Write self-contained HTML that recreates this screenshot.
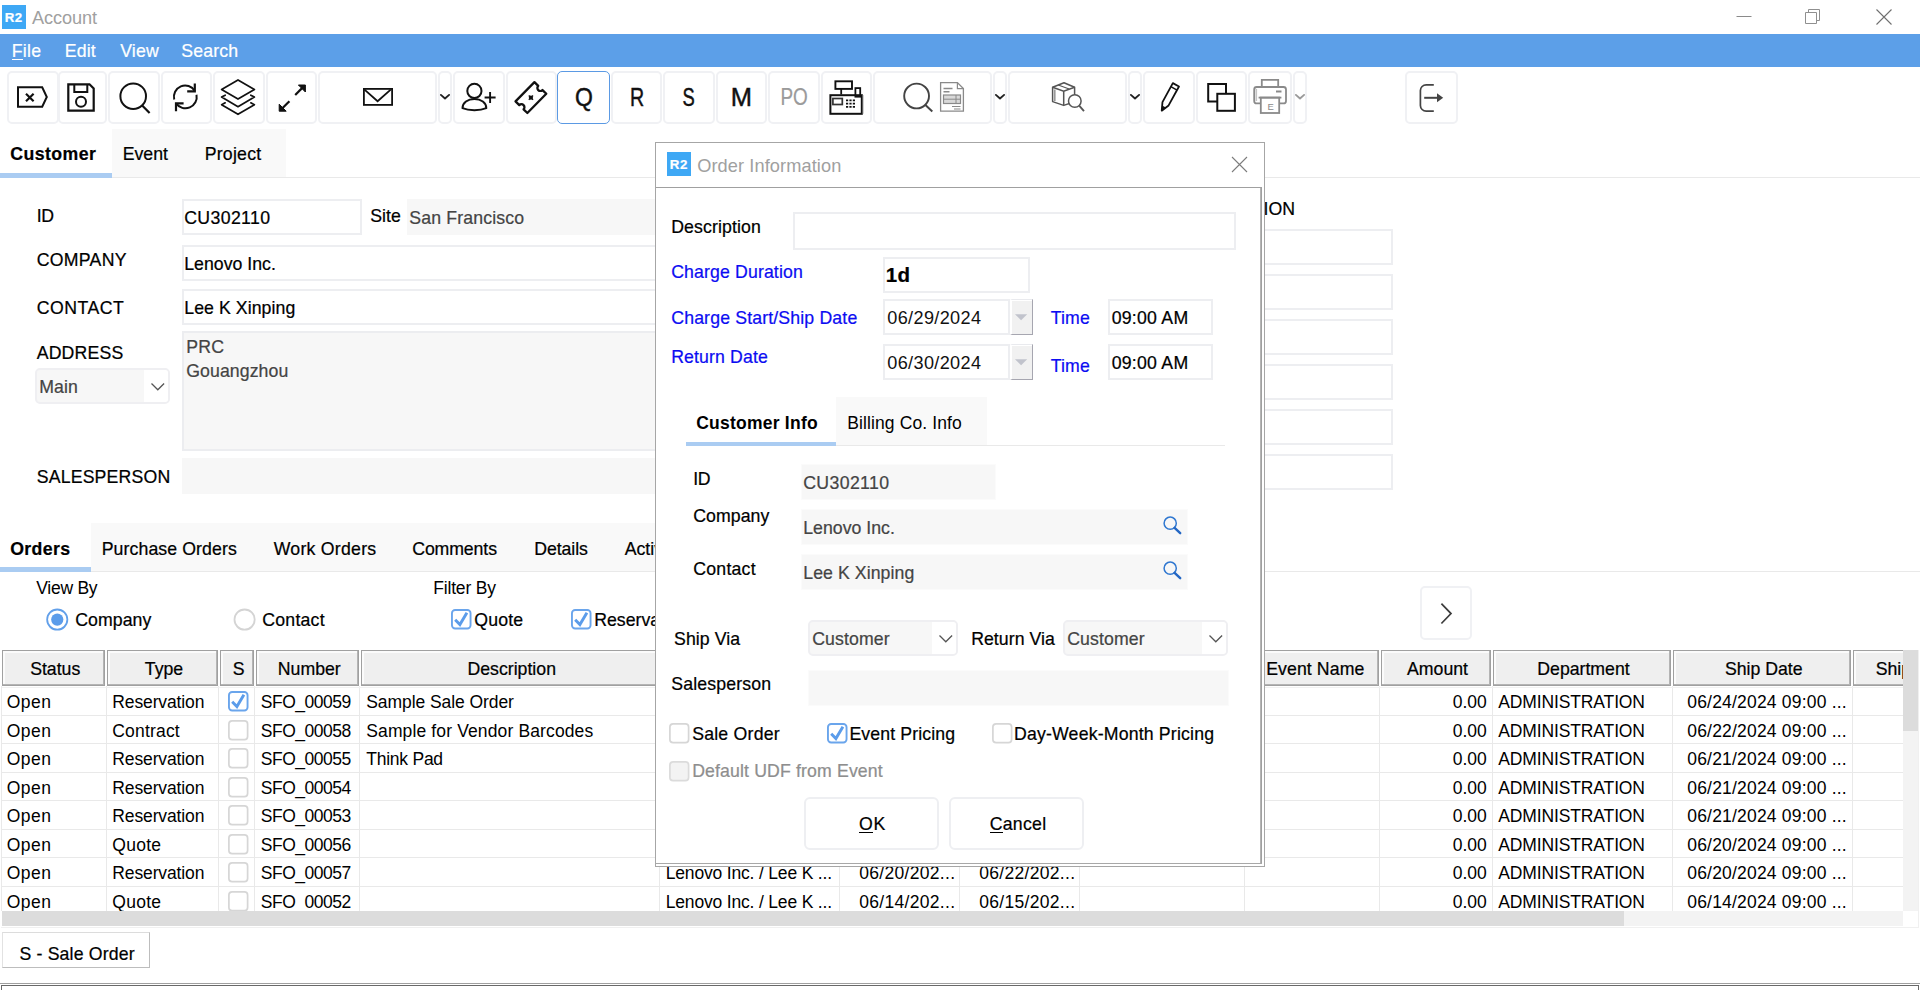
<!DOCTYPE html>
<html lang="en"><head><meta charset="utf-8"><title>Account</title>
<style>
html,body{margin:0;padding:0;background:#fff;}
body{width:1920px;height:990px;overflow:hidden;font-family:"Liberation Sans",sans-serif;color:#000;}
#app{position:relative;width:1920px;height:990px;overflow:hidden;background:#fff;}
#app div,#app span.t,#app svg{position:absolute;box-sizing:border-box;}
.t{white-space:pre;line-height:1;-webkit-text-stroke:0.22px currentColor;}
.t u{text-decoration:underline;text-underline-offset:2px;text-decoration-thickness:1.5px;}
.tb{border:2px solid #f0f1f4;border-radius:5px;background:#fff;}
.tbq{border:1.5px solid #5b9ae4;border-radius:5px;background:#fff;}
.inp{border:2px solid #edeef1;background:#fff;}
.ro{background:#f7f7f7;}
.ro2{background:#f7f7f7;border:1px solid #fbfbfb;}
.rob{background:#f7f7f7;border:2px solid #ecedf0;}
.dd{background:#f7f7f7;border:2px solid #efeff2;border-radius:5px;overflow:hidden;}
.dd i{position:absolute;right:0;top:0;bottom:0;width:24px;background:#fff;}
.th{background:#efefef;border:1px solid #a0a0a0;box-shadow:inset -1px -1px 0 #b4b4b4, inset 2px 2px 0 #fbfbfb;}
.cb{border:1px solid #c9c9c9;border-radius:3px;background:#fff;}
.cbc{border:1.5px solid #5b9be6;border-radius:3px;background:#fff;}
.cbd{border:1px solid #d4d4d4;border-radius:3px;background:#f3f3f3;}
.vl{background:#e9e9e9;width:1px;}
.hl{background:#e9e9e9;height:1px;}
.btn{border:2px solid #eeeff2;border-radius:6px;background:#fff;}

</style></head>
<body>
<div id="app">
<div style="left:2px;top:5px;width:24px;height:24px;background:#3ea8f5;"></div>
<span class="t" style="left:4.80px;top:11.00px;font-size:13.3px;letter-spacing:0.432px;font-weight:700;color:#fff;">R2</span>
<span class="t" style="left:31.93px;top:9.00px;font-size:18.2px;letter-spacing:-0.105px;color:#a0a0a0;-webkit-text-stroke:0;">Account</span>
<svg style="left:1730px;top:4px;" width="170" height="26" viewBox="0 0 170 26">
      <path d="M6.5 12.5h15" stroke="#8a8a8a" stroke-width="1" fill="none"/>
      <path d="M75.5 8.500000h11v11h-11z M78.5 8.500000v-3h11v11h-3" stroke="#8f8f8f" stroke-width="1" fill="none"/>
      <path d="M146.5 5.5l15 15 M161.5 5.5l-15 15" stroke="#6f6f6f" stroke-width="1.1" fill="none"/></svg>
<div style="left:0px;top:34px;width:1920px;height:33px;background:#5c9fe8;"></div>
<span class="t" style="left:11.73px;top:43.00px;font-size:17.7px;letter-spacing:0.284px;color:#fff;">File</span><div style="left:11.73px;top:58.5px;width:10.95px;height:1.5px;background:#fff;"></div>
<span class="t" style="left:64.73px;top:43.00px;font-size:17.7px;letter-spacing:0.167px;color:#fff;">Edit</span>
<span class="t" style="left:120.23px;top:43.00px;font-size:17.7px;letter-spacing:0.155px;color:#fff;">View</span>
<span class="t" style="left:181.23px;top:43.00px;font-size:17.7px;letter-spacing:0.184px;color:#fff;">Search</span>
<div class="tb" style="left:7px;top:71px;width:51.5px;height:52.5px;"></div>
<svg style="left:12px;top:80px;" width="42" height="36" viewBox="12 80 42 36">
<path d="M18 87.3h24.2l4.6 9.7-4.6 9.7H18z" fill="none" stroke="#111" stroke-width="2" stroke-linejoin="miter"/>
<path d="M26 93.8l7.6 7.4M33.6 93.8l-7.6 7.4" stroke="#111" stroke-width="2.2"/></svg>
<div class="tb" style="left:58px;top:71px;width:48.5px;height:52.5px;"></div>
<svg style="left:62px;top:78px;" width="38" height="38" viewBox="62 78 38 38">
<path d="M68.3 84.3h21.2l4.2 4.2v22.2H68.3z" fill="none" stroke="#111" stroke-width="2.2"/>
<path d="M74.3 84.5v7.6h13v-7.6" fill="none" stroke="#111" stroke-width="2"/>
<circle cx="81" cy="101.8" r="5" fill="none" stroke="#111" stroke-width="2"/></svg>
<div class="tb" style="left:107.5px;top:71px;width:52px;height:52.5px;"></div>
<svg style="left:115px;top:78px;" width="40" height="40" viewBox="115 78 40 40">
<circle cx="133.2" cy="96.2" r="12.8" fill="none" stroke="#111" stroke-width="2"/>
<path d="M142.2 105.4l7.4 7.6" stroke="#111" stroke-width="2.2"/></svg>
<div class="tb" style="left:160.5px;top:71px;width:51px;height:52.5px;"></div>
<svg style="left:166px;top:78px;" width="40" height="40" viewBox="166 78 40 40">
<path d="M174.2 99.5a11.3 11.3 0 0 1 20.6-8.6" fill="none" stroke="#111" stroke-width="2"/>
<path d="M196.5 94.8a11.3 11.3 0 0 1 -20.4 8.6" fill="none" stroke="#111" stroke-width="2"/>
<path d="M194.8 83.4v7.9h-7.6" fill="none" stroke="#111" stroke-width="2.2"/>
<path d="M176 111.2v-7.9h7.6" fill="none" stroke="#111" stroke-width="2.2"/></svg>
<div class="tb" style="left:212.5px;top:71px;width:52px;height:52.5px;"></div>
<svg style="left:216px;top:76px;" width="44" height="44" viewBox="216 76 44 44">
<path d="M238 79.9l16.4 9.6-16.4 9.6-16.4-9.600000z" fill="none" stroke="#111" stroke-width="1.700000" stroke-linejoin="round"/>
<path d="M225.2 95.200000l-3.600000 1.900000 16.400000 9.600000 16.400000-9.600000-3.600000-1.900000" fill="none" stroke="#111" stroke-width="1.700000" stroke-linejoin="round" stroke-linecap="round"/>
<path d="M225.2 102.800000l-3.600000 1.900000 16.400000 9.600000 16.400000-9.600000-3.600000-1.900000" fill="none" stroke="#111" stroke-width="1.700000" stroke-linejoin="round" stroke-linecap="round"/></svg>
<div class="tb" style="left:265.5px;top:71px;width:51px;height:52.5px;"></div>
<svg style="left:272px;top:78px;" width="40" height="40" viewBox="272 78 40 40">
<path d="M295.2 95l8.600000-8.600000" stroke="#111" stroke-width="2.200000"/>
<path d="M298.4 85h7v7z" fill="#111" stroke="#111" stroke-width="1"/>
<path d="M289.400000 101.200000l-8.600000 8.600000" stroke="#111" stroke-width="2.200000"/>
<path d="M286.2 111.200000h-7v-7z" fill="#111" stroke="#111" stroke-width="1"/></svg>
<div class="tb" style="left:317.5px;top:71px;width:119px;height:52.5px;"></div>
<svg style="left:358px;top:82px;" width="40" height="30" viewBox="358 82 40 30">
<rect x="363.9" y="88.9" width="28.2" height="16" fill="none" stroke="#111" stroke-width="1.8"/>
<path d="M364.5 89.6l13.1 11.6 13.1-11.6" fill="none" stroke="#111" stroke-width="1.8"/></svg>
<div class="tb" style="left:437.5px;top:71px;width:14px;height:52.5px;"></div>
<svg style="left:437.5px;top:90px;" width="14" height="14" viewBox="437.5 90 14 14">
<path d="M440.4 94.9l4.1 3.6 4.1-3.6" fill="none" stroke="#222" stroke-width="1.9" stroke-linecap="round" stroke-linejoin="round"/></svg>
<div class="tb" style="left:452.5px;top:71px;width:52px;height:52.5px;"></div>
<svg style="left:456px;top:78px;" width="46" height="38" viewBox="456 78 46 38">
<circle cx="474.4" cy="90.9" r="7.1" fill="none" stroke="#111" stroke-width="2"/>
<path d="M462.5 108.2c0-5.4 5.2-9.2 11.9-9.2s11.900000 3.8 11.9 9.2c-3 1.300000-7 2-11.9 2s-8.900000-.7-11.9-2z" fill="none" stroke="#111" stroke-width="2" stroke-linejoin="round"/>
<path d="M484.6 97.5h11M490.1 92v11" stroke="#111" stroke-width="1.9"/></svg>
<div class="tb" style="left:505.5px;top:71px;width:51px;height:52.5px;"></div>
<svg style="left:510px;top:76px;" width="42" height="42" viewBox="510 76 42 42">
<g transform="translate(530.9 97.6) rotate(-45.5)">
<path d="M-13.500000 -8.300000h27v5.300000a3 3 0 0 0 0 6v5.300000h-27v-5.300000a3 3 0 0 0 0 -6z" fill="none" stroke="#111" stroke-width="2.300000" stroke-linejoin="round"/>
<circle cx="0" cy="0" r="2" fill="#111"/>
<path d="M-3 0h6M0 -3v6" stroke="#111" stroke-width="1.400000"/>
</g></svg>
<div class="tbq" style="left:557px;top:71px;width:53px;height:52.5px;"></div>
<span class="t" style="left:574.38px;top:85.00px;font-size:25.5px;color:#111;transform:scaleX(0.9);transform-origin:center center;-webkit-text-stroke:0.45px #111;">Q</span>
<div class="tb" style="left:610.5px;top:71px;width:51px;height:52.5px;"></div>
<span class="t" style="left:627.69px;top:85.00px;font-size:25.5px;color:#111;transform:scaleX(0.77);transform-origin:center center;-webkit-text-stroke:0.45px #111;">R</span>
<div class="tb" style="left:662.5px;top:71px;width:52px;height:52.5px;"></div>
<span class="t" style="left:679.99px;top:85.00px;font-size:25.5px;color:#111;transform:scaleX(0.72);transform-origin:center center;-webkit-text-stroke:0.45px #111;">S</span>
<div class="tb" style="left:715.5px;top:71px;width:51px;height:52.5px;"></div>
<span class="t" style="left:730.77px;top:85.00px;font-size:25.5px;color:#111;transform:scaleX(1);transform-origin:center center;-webkit-text-stroke:0.45px #111;">M</span>
<div class="tb" style="left:767.5px;top:71px;width:52px;height:52.5px;"></div>
<span class="t" style="left:776.78px;top:86.00px;font-size:23.7px;color:#9a9a9a;transform:scaleX(0.8);transform-origin:center center;">PO</span>
<div class="tb" style="left:820.5px;top:71px;width:51px;height:52.5px;"></div>
<svg style="left:826px;top:77px;" width="42" height="41" viewBox="826 77 42 41">
<rect x="835.4" y="81.300000" width="16.6" height="7.6" fill="none" stroke="#111" stroke-width="1.900000"/>
<path d="M841.2 89v5.500000" stroke="#111" stroke-width="1.800000"/>
<rect x="855.4" y="88.100000" width="4.800000" height="8.600000" fill="none" stroke="#111" stroke-width="1.800000"/>
<rect x="830.4" y="95.200000" width="31.400000" height="18.600000" fill="none" stroke="#111" stroke-width="2"/>
<path d="M862.8 95v18.800000" stroke="#666" stroke-width="1"/>
<rect x="832.9" y="98.500000" width="9.400000" height="6" fill="none" stroke="#333" stroke-width="1.700000"/>
<path d="M846 100.4h9M846 103.6h9M846 106.800000h9" stroke="#111" stroke-width="1.700000" stroke-dasharray="2.2 1.2"/></svg>
<div class="tb" style="left:872.5px;top:71px;width:119px;height:52.5px;"></div>
<svg style="left:898px;top:78px;" width="72" height="38" viewBox="898 78 72 38">
<circle cx="916.6" cy="96" r="12.4" fill="none" stroke="#444" stroke-width="1.900000"/>
<path d="M925.4 105.100000l6.900000 6.300000" stroke="#444" stroke-width="2"/>
<path d="M940.6 82.600000h16.800000l6 6v22.600000h-22.800000z" fill="#fff" stroke="#8a8a8a" stroke-width="1.300000"/>
<path d="M957.4 82.600000v6h6" fill="none" stroke="#8a8a8a" stroke-width="1.200000"/>
<path d="M943.5 88.500000h9M943.5 91.700000h6" stroke="#8a8a8a" stroke-width="1.500000"/>
<rect x="943.5" y="95" width="17" height="8.500000" fill="#d9d9d9" stroke="#8a8a8a" stroke-width="1.200000"/>
<path d="M943.5 99.200000h17M956 95v8.500000" stroke="#8a8a8a" stroke-width="1"/>
<path d="M952 106.500000h8.500000M954 109h6.500000" stroke="#8a8a8a" stroke-width="1.200000"/></svg>
<div class="tb" style="left:992.5px;top:71px;width:14px;height:52.5px;"></div>
<svg style="left:992.5px;top:90px;" width="14" height="14" viewBox="992.5 90 14 14">
<path d="M995.4 94.9l4.1 3.6 4.1-3.6" fill="none" stroke="#222" stroke-width="1.9" stroke-linecap="round" stroke-linejoin="round"/></svg>
<div class="tb" style="left:1007.5px;top:71px;width:119px;height:52.5px;"></div>
<svg style="left:1046px;top:78px;" width="44" height="38" viewBox="1046 78 44 38">
<path d="M1052.6 87.300000l11.400000-4.600000 10.600000 4.600000v14.500000l-10.900000 3.600000-11.100000-3.800000z" fill="none" stroke="#555" stroke-width="1.500000" stroke-linejoin="round"/>
<path d="M1052.6 87.300000l11.100000 3.800000 10.900000-3.800000M1063.700000 91.100000v14.300000" fill="none" stroke="#555" stroke-width="1.500000"/>
<path d="M1058.2 85l11 4" stroke="#555" stroke-width="1.200000"/>
<path d="M1054.8 89.500000v11.500000" stroke="#999" stroke-width="1.600000"/>
<circle cx="1074.800000" cy="101" r="6.300000" fill="#fff" stroke="#555" stroke-width="1.500000"/>
<path d="M1079.4 105.800000l4.600000 5.400000" stroke="#555" stroke-width="1.800000"/></svg>
<div class="tb" style="left:1127.5px;top:71px;width:14px;height:52.5px;"></div>
<svg style="left:1127.5px;top:90px;" width="14" height="14" viewBox="1127.5 90 14 14">
<path d="M1130.4 94.9l4.1 3.6 4.1-3.6" fill="none" stroke="#222" stroke-width="1.9" stroke-linecap="round" stroke-linejoin="round"/></svg>
<div class="tb" style="left:1142.5px;top:71px;width:52px;height:52.5px;"></div>
<svg style="left:1150px;top:78px;" width="38" height="40" viewBox="1150 78 38 40">
<g transform="translate(1168.9 97.6) rotate(28.7)">
<path d="M-3.500000 -14.600000h7v21.600000l-3.500000 7.900000-3.500000-7.900000z" fill="none" stroke="#111" stroke-width="1.800000" stroke-linejoin="round"/>
<path d="M-3.500000 -10.500000h7" stroke="#111" stroke-width="1.500000"/>
<path d="M-2.200000 10.200000l2.200000 5 2.200000-5z" fill="#111"/>
</g></svg>
<div class="tb" style="left:1195.5px;top:71px;width:51px;height:52.5px;"></div>
<svg style="left:1202px;top:78px;" width="40" height="40" viewBox="1202 78 40 40">
<rect x="1208.2" y="84" width="17.800000" height="17.500000" fill="none" stroke="#111" stroke-width="2"/>
<rect x="1217.3" y="93.800000" width="17.600000" height="17" fill="#fff" stroke="#111" stroke-width="2"/></svg>
<div class="tb" style="left:1247.5px;top:71px;width:44px;height:52.5px;"></div>
<svg style="left:1250px;top:76px;" width="40" height="42" viewBox="1250 76 40 42">
<path d="M1261.800000 87v-7.200000h16.400000v7.200000" fill="none" stroke="#8a8a8a" stroke-width="1.800000"/>
<rect x="1254.2" y="87" width="31.800000" height="16.400000" rx="2.500000" fill="#fff" stroke="#8a8a8a" stroke-width="1.800000"/>
<path d="M1256.300000 89v12" stroke="#c4c4c4" stroke-width="1.600000"/>
<path d="M1276 91.500000h5.500000" stroke="#8a8a8a" stroke-width="2"/>
<rect x="1260.800000" y="97.600000" width="18.400000" height="15.400000" fill="#fff" stroke="#8a8a8a" stroke-width="1.800000"/>
<path d="M1258.600000 97.600000h22.800000" stroke="#8a8a8a" stroke-width="1.800000"/>
<text x="1270.6" y="109.800000" font-family="Liberation Sans, sans-serif" font-size="9.500000" fill="#8a8a8a" text-anchor="middle">E</text></svg>
<div class="tb" style="left:1292.5px;top:71px;width:14px;height:52.5px;"></div>
<svg style="left:1292.5px;top:90px;" width="14" height="14" viewBox="1292.5 90 14 14">
<path d="M1295.4 94.9l4.1 3.6 4.1-3.6" fill="none" stroke="#9a9a9a" stroke-width="1.9" stroke-linecap="round" stroke-linejoin="round"/></svg>
<div class="tb" style="left:1404.5px;top:71px;width:53px;height:52.5px;"></div>
<svg style="left:1412px;top:78px;" width="40" height="40" viewBox="1412 78 40 40">
<path d="M1433.800000 84.800000h-7.600000a5.800000 5.800000 0 0 0 -5.800000 5.800000v14.800000a5.800000 5.800000 0 0 0 5.800000 5.800000h7.600000" fill="none" stroke="#444" stroke-width="1.700000"/>
<path d="M1424.200000 97.800000h14" stroke="#444" stroke-width="2"/>
<path d="M1437 93.300000l6.200000 4.500000-6.200000 4.500000z" fill="#444"/></svg>
<div style="left:112px;top:129px;width:174px;height:48px;background:#f9f9f9;"></div>
<div style="left:0px;top:177px;width:1920px;height:1px;background:#e9e9e9;"></div>
<div style="left:0px;top:173px;width:112px;height:5px;background:#aaccf2;"></div>
<span class="t" style="left:10.23px;top:146.00px;font-size:17.7px;letter-spacing:0.448px;font-weight:700;">Customer</span>
<span class="t" style="left:122.73px;top:146.00px;font-size:17.7px;letter-spacing:-0.017px;">Event</span>
<span class="t" style="left:204.73px;top:146.00px;font-size:17.7px;letter-spacing:0.227px;">Project</span>
<span class="t" style="left:36.73px;top:208.00px;font-size:17.7px;letter-spacing:-0.268px;">ID</span>
<span class="t" style="left:36.73px;top:252.00px;font-size:17.7px;letter-spacing:0.289px;">COMPANY</span>
<span class="t" style="left:36.73px;top:300.00px;font-size:17.7px;letter-spacing:0.497px;">CONTACT</span>
<span class="t" style="left:36.73px;top:345.00px;font-size:17.7px;letter-spacing:0.162px;">ADDRESS</span>
<span class="t" style="left:36.73px;top:469.00px;font-size:17.7px;letter-spacing:0.174px;">SALESPERSON</span>
<span class="t" style="left:370.23px;top:208.00px;font-size:17.7px;letter-spacing:0.042px;">Site</span>
<div class="inp" style="left:182px;top:199px;width:180px;height:36px;"></div>
<span class="t" style="left:184.23px;top:210.00px;font-size:17.7px;letter-spacing:0.361px;">CU302110</span>
<div class="ro" style="left:407px;top:199px;width:773px;height:36px;"></div>
<span class="t" style="left:409.23px;top:210.00px;font-size:17.7px;letter-spacing:0.161px;color:#444;">San Francisco</span>
<div class="inp" style="left:182px;top:245px;width:998px;height:36px;"></div>
<span class="t" style="left:184.23px;top:256.00px;font-size:17.7px;letter-spacing:0.018px;">Lenovo Inc.</span>
<div class="inp" style="left:182px;top:289px;width:998px;height:36px;"></div>
<span class="t" style="left:184.23px;top:300.00px;font-size:17.7px;letter-spacing:0.076px;">Lee K Xinping</span>
<div class="rob" style="left:182px;top:331px;width:998px;height:120px;"></div>
<span class="t" style="left:186.23px;top:339.00px;font-size:17.7px;letter-spacing:0.264px;color:#444;">PRC</span>
<span class="t" style="left:186.23px;top:363.00px;font-size:17.7px;letter-spacing:0.084px;color:#444;">Gouangzhou</span>
<div class="ro" style="left:182px;top:458px;width:998px;height:36px;"></div>
<div class="dd" style="left:35px;top:368px;width:135px;height:36px;"><i></i></div>
<span class="t" style="left:39.23px;top:379.00px;font-size:17.7px;letter-spacing:0.077px;color:#444;">Main</span>
<svg style="left:149px;top:380px;" width="18" height="14" viewBox="0 0 18 14"><path d="M2.5 3.5l6.3 6.3 6.3-6.3" stroke="#555" stroke-width="1.3" fill="none"/></svg>
<span class="t" style="left:1062.17px;top:201.00px;font-size:17.7px;">ADDITIONAL INFORMATION</span>
<div class="inp" style="left:1200px;top:229px;width:193px;height:36px;"></div>
<div class="inp" style="left:1200px;top:274px;width:193px;height:36px;"></div>
<div class="inp" style="left:1200px;top:319px;width:193px;height:36px;"></div>
<div class="inp" style="left:1200px;top:364px;width:193px;height:36px;"></div>
<div class="inp" style="left:1200px;top:409px;width:193px;height:36px;"></div>
<div class="inp" style="left:1200px;top:454px;width:193px;height:36px;"></div>
<div style="left:91px;top:523px;width:1109px;height:48px;background:#f9f9f9;"></div>
<div style="left:0px;top:571px;width:1920px;height:1px;background:#e9e9e9;"></div>
<div style="left:0px;top:567px;width:91px;height:5px;background:#aaccf2;"></div>
<span class="t" style="left:10.23px;top:541.00px;font-size:17.7px;letter-spacing:0.356px;font-weight:700;">Orders</span>
<span class="t" style="left:101.73px;top:541.00px;font-size:17.7px;letter-spacing:0.096px;">Purchase Orders</span>
<span class="t" style="left:273.73px;top:541.00px;font-size:17.7px;letter-spacing:0.248px;">Work Orders</span>
<span class="t" style="left:412.23px;top:541.00px;font-size:17.7px;letter-spacing:-0.108px;">Comments</span>
<span class="t" style="left:534.23px;top:541.00px;font-size:17.7px;letter-spacing:-0.061px;">Details</span>
<span class="t" style="left:624.73px;top:541.00px;font-size:17.7px;">Activities</span>
<span class="t" style="left:36.24px;top:580.00px;font-size:17.5px;letter-spacing:-0.253px;-webkit-text-stroke:0;">View By</span>
<span class="t" style="left:433.24px;top:580.00px;font-size:17.5px;letter-spacing:-0.172px;-webkit-text-stroke:0;">Filter By</span>
<svg style="left:45px;top:607px;" width="25" height="25" viewBox="0 0 25 25"><circle cx="12.25" cy="12.6" r="10.1" fill="#fff" stroke="#62a0ea" stroke-width="1.800000"/><circle cx="12.25" cy="12.6" r="6.1" fill="#5b9cea"/></svg>
<span class="t" style="left:75.23px;top:612.00px;font-size:17.7px;letter-spacing:0.064px;">Company</span>
<svg style="left:232px;top:607px;" width="25" height="25" viewBox="0 0 25 25"><circle cx="12.6" cy="12.6" r="10.1" fill="#fff" stroke="#d4d4d4" stroke-width="1.800000"/></svg>
<span class="t" style="left:262.23px;top:612.00px;font-size:17.7px;letter-spacing:0.240px;">Contact</span>
<svg style="left:451.25px;top:608.6px;" width="21" height="21" viewBox="0 0 21 21"><rect x="0.95" y="0.95" width="18.6" height="18.6" rx="3.2" fill="#fff" stroke="#6aa5ec" stroke-width="1.9"/><path d="M4.2 10.8l4.700000 4.800000 7-11.800000" stroke="#5b9cea" stroke-width="2.900000" fill="none" stroke-linejoin="miter"/></svg>
<span class="t" style="left:474.23px;top:612.00px;font-size:17.7px;letter-spacing:0.193px;">Quote</span>
<svg style="left:571.25px;top:608.6px;" width="21" height="21" viewBox="0 0 21 21"><rect x="0.95" y="0.95" width="18.6" height="18.6" rx="3.2" fill="#fff" stroke="#6aa5ec" stroke-width="1.9"/><path d="M4.2 10.8l4.700000 4.800000 7-11.800000" stroke="#5b9cea" stroke-width="2.900000" fill="none" stroke-linejoin="miter"/></svg>
<span class="t" style="left:594.23px;top:612.00px;font-size:17.7px;">Reservation</span>
<div class="tb" style="left:1420px;top:586px;width:52px;height:54px;"></div>
<svg style="left:1436px;top:600px;" width="20" height="26" viewBox="0 0 20 26"><path d="M5.400000 3.700000l9.600000 9.900000-9.600000 9.900000" stroke="#3c3c3c" stroke-width="1.700000" fill="none"/></svg>
<div class="vl" style="left:1px;top:686px;width:1px;height:225px;"></div>
<div class="vl" style="left:105.5px;top:686px;width:1px;height:225px;"></div>
<div class="vl" style="left:218px;top:686px;width:1px;height:225px;"></div>
<div class="vl" style="left:254px;top:686px;width:1px;height:225px;"></div>
<div class="vl" style="left:359px;top:686px;width:1px;height:225px;"></div>
<div class="vl" style="left:659px;top:686px;width:1px;height:225px;"></div>
<div class="vl" style="left:839px;top:686px;width:1px;height:225px;"></div>
<div class="vl" style="left:959px;top:686px;width:1px;height:225px;"></div>
<div class="vl" style="left:1079px;top:686px;width:1px;height:225px;"></div>
<div class="vl" style="left:1244px;top:686px;width:1px;height:225px;"></div>
<div class="vl" style="left:1378.5px;top:686px;width:1px;height:225px;"></div>
<div class="vl" style="left:1491.5px;top:686px;width:1px;height:225px;"></div>
<div class="vl" style="left:1671.5px;top:686px;width:1px;height:225px;"></div>
<div class="vl" style="left:1851.5px;top:686px;width:1px;height:225px;"></div>
<div style="left:2px;top:687px;width:1901px;height:1px;background:#f1f1f1;"></div>
<div class="hl" style="left:2px;top:715px;width:1901px;height:1px;"></div>
<div class="hl" style="left:2px;top:743px;width:1901px;height:1px;"></div>
<div class="hl" style="left:2px;top:772px;width:1901px;height:1px;"></div>
<div class="hl" style="left:2px;top:800px;width:1901px;height:1px;"></div>
<div class="hl" style="left:2px;top:829px;width:1901px;height:1px;"></div>
<div class="hl" style="left:2px;top:857px;width:1901px;height:1px;"></div>
<div class="hl" style="left:2px;top:886px;width:1901px;height:1px;"></div>
<div class="hl" style="left:2px;top:914px;width:1901px;height:1px;"></div>
<div class="th" style="left:2px;top:650px;width:103px;height:36px;"></div>
<span class="t" style="left:30.17px;top:661.00px;font-size:17.7px;">Status</span>
<div class="th" style="left:107px;top:650px;width:110.5px;height:36px;"></div>
<span class="t" style="left:144.82px;top:661.00px;font-size:17.7px;">Type</span>
<div class="th" style="left:220px;top:650px;width:34px;height:36px;"></div>
<span class="t" style="left:232.84px;top:661.00px;font-size:17.7px;">S</span>
<div class="th" style="left:256px;top:650px;width:103px;height:36px;"></div>
<span class="t" style="left:277.79px;top:661.00px;font-size:17.7px;">Number</span>
<div class="th" style="left:361px;top:650px;width:298px;height:36px;"></div>
<span class="t" style="left:467.51px;top:661.00px;font-size:17.7px;">Description</span>
<div class="th" style="left:661px;top:650px;width:178px;height:36px;"></div>
<span class="t" style="left:713.41px;top:661.00px;font-size:17.7px;">Customer</span>
<div class="th" style="left:841px;top:650px;width:118px;height:36px;"></div>
<span class="t" style="left:861.93px;top:661.00px;font-size:17.7px;">Start Date</span>
<div class="th" style="left:961px;top:650px;width:118px;height:36px;"></div>
<span class="t" style="left:984.88px;top:661.00px;font-size:17.7px;">End Date</span>
<div class="th" style="left:1081px;top:650px;width:162px;height:36px;"></div>
<span class="t" style="left:1129.83px;top:661.00px;font-size:17.7px;">Event ID</span>
<div class="th" style="left:1245px;top:650px;width:133.5px;height:36px;"></div>
<span class="t" style="left:1266.23px;top:661.00px;font-size:17.7px;letter-spacing:0.082px;">Event Name</span>
<div class="th" style="left:1381px;top:650px;width:109.5px;height:36px;"></div>
<span class="t" style="left:1407.02px;top:661.00px;font-size:17.7px;">Amount</span>
<div class="th" style="left:1493px;top:650px;width:177.5px;height:36px;"></div>
<span class="t" style="left:1537.29px;top:661.00px;font-size:17.7px;">Department</span>
<div class="th" style="left:1673px;top:650px;width:178px;height:36px;"></div>
<span class="t" style="left:1724.91px;top:661.00px;font-size:17.7px;">Ship Date</span>
<div class="th" style="left:1853px;top:650px;width:107px;height:36px;"></div>
<span class="t" style="left:1875.73px;top:661.00px;font-size:17.7px;">Ship Via</span>
<span class="t" style="left:6.74px;top:694.00px;font-size:17.5px;letter-spacing:0.456px;-webkit-text-stroke:0;">Open</span>
<span class="t" style="left:112.24px;top:694.00px;font-size:17.5px;letter-spacing:-0.114px;-webkit-text-stroke:0;">Reservation</span>
<svg style="left:227.75px;top:691.4px;" width="21" height="21" viewBox="0 0 21 21"><rect x="0.95" y="0.95" width="18.6" height="18.6" rx="3.2" fill="#fff" stroke="#6aa5ec" stroke-width="1.9"/><path d="M4.2 10.8l4.700000 4.800000 7-11.800000" stroke="#5b9cea" stroke-width="2.900000" fill="none" stroke-linejoin="miter"/></svg>
<span class="t" style="left:260.74px;top:694.00px;font-size:17.5px;letter-spacing:-0.471px;-webkit-text-stroke:0;">SFO_00059</span>
<span class="t" style="left:366.24px;top:694.00px;font-size:17.5px;letter-spacing:-0.070px;-webkit-text-stroke:0;">Sample Sale Order</span>
<span class="t" style="left:665.74px;top:694.00px;font-size:17.5px;letter-spacing:-0.179px;-webkit-text-stroke:0;">Lenovo Inc. / Lee K ...</span>
<span class="t" style="left:859.24px;top:694.00px;font-size:17.5px;letter-spacing:0.307px;-webkit-text-stroke:0;">06/24/202...</span>
<span class="t" style="left:979.24px;top:694.00px;font-size:17.5px;letter-spacing:0.307px;-webkit-text-stroke:0;">06/25/202...</span>
<span class="t" style="left:1452.64px;top:694.00px;font-size:17.5px;letter-spacing:0.019px;-webkit-text-stroke:0;">0.00</span>
<span class="t" style="left:1498.24px;top:694.00px;font-size:17.5px;letter-spacing:-0.129px;-webkit-text-stroke:0;">ADMINISTRATION</span>
<span class="t" style="left:1687.24px;top:694.00px;font-size:17.5px;letter-spacing:0.197px;-webkit-text-stroke:0;">06/24/2024 09:00 ...</span>
<span class="t" style="left:6.74px;top:723.00px;font-size:17.5px;letter-spacing:0.456px;-webkit-text-stroke:0;">Open</span>
<span class="t" style="left:112.24px;top:723.00px;font-size:17.5px;letter-spacing:0.187px;-webkit-text-stroke:0;">Contract</span>
<svg style="left:227.75px;top:720.4px;" width="21" height="21" viewBox="0 0 21 21"><rect x="0.9" y="0.9" width="18.7" height="18.7" rx="3.2" fill="#fff" stroke="#d6d6d6" stroke-width="1.700000"/></svg>
<span class="t" style="left:260.74px;top:723.00px;font-size:17.5px;letter-spacing:-0.471px;-webkit-text-stroke:0;">SFO_00058</span>
<span class="t" style="left:366.24px;top:723.00px;font-size:17.5px;letter-spacing:0.130px;-webkit-text-stroke:0;">Sample for Vendor Barcodes</span>
<span class="t" style="left:665.74px;top:723.00px;font-size:17.5px;letter-spacing:-0.179px;-webkit-text-stroke:0;">Lenovo Inc. / Lee K ...</span>
<span class="t" style="left:859.24px;top:723.00px;font-size:17.5px;letter-spacing:0.307px;-webkit-text-stroke:0;">06/22/202...</span>
<span class="t" style="left:979.24px;top:723.00px;font-size:17.5px;letter-spacing:0.307px;-webkit-text-stroke:0;">06/23/202...</span>
<span class="t" style="left:1452.64px;top:723.00px;font-size:17.5px;letter-spacing:0.019px;-webkit-text-stroke:0;">0.00</span>
<span class="t" style="left:1498.24px;top:723.00px;font-size:17.5px;letter-spacing:-0.129px;-webkit-text-stroke:0;">ADMINISTRATION</span>
<span class="t" style="left:1687.24px;top:723.00px;font-size:17.5px;letter-spacing:0.197px;-webkit-text-stroke:0;">06/22/2024 09:00 ...</span>
<span class="t" style="left:6.74px;top:751.00px;font-size:17.5px;letter-spacing:0.456px;-webkit-text-stroke:0;">Open</span>
<span class="t" style="left:112.24px;top:751.00px;font-size:17.5px;letter-spacing:-0.114px;-webkit-text-stroke:0;">Reservation</span>
<svg style="left:227.75px;top:748.4px;" width="21" height="21" viewBox="0 0 21 21"><rect x="0.9" y="0.9" width="18.7" height="18.7" rx="3.2" fill="#fff" stroke="#d6d6d6" stroke-width="1.700000"/></svg>
<span class="t" style="left:260.74px;top:751.00px;font-size:17.5px;letter-spacing:-0.471px;-webkit-text-stroke:0;">SFO_00055</span>
<span class="t" style="left:366.24px;top:751.00px;font-size:17.5px;letter-spacing:-0.240px;-webkit-text-stroke:0;">Think Pad</span>
<span class="t" style="left:665.74px;top:751.00px;font-size:17.5px;letter-spacing:-0.179px;-webkit-text-stroke:0;">Lenovo Inc. / Lee K ...</span>
<span class="t" style="left:859.24px;top:751.00px;font-size:17.5px;letter-spacing:0.307px;-webkit-text-stroke:0;">06/21/202...</span>
<span class="t" style="left:979.24px;top:751.00px;font-size:17.5px;letter-spacing:0.307px;-webkit-text-stroke:0;">06/22/202...</span>
<span class="t" style="left:1452.64px;top:751.00px;font-size:17.5px;letter-spacing:0.019px;-webkit-text-stroke:0;">0.00</span>
<span class="t" style="left:1498.24px;top:751.00px;font-size:17.5px;letter-spacing:-0.129px;-webkit-text-stroke:0;">ADMINISTRATION</span>
<span class="t" style="left:1687.24px;top:751.00px;font-size:17.5px;letter-spacing:0.197px;-webkit-text-stroke:0;">06/21/2024 09:00 ...</span>
<span class="t" style="left:6.74px;top:780.00px;font-size:17.5px;letter-spacing:0.456px;-webkit-text-stroke:0;">Open</span>
<span class="t" style="left:112.24px;top:780.00px;font-size:17.5px;letter-spacing:-0.114px;-webkit-text-stroke:0;">Reservation</span>
<svg style="left:227.75px;top:777.4px;" width="21" height="21" viewBox="0 0 21 21"><rect x="0.9" y="0.9" width="18.7" height="18.7" rx="3.2" fill="#fff" stroke="#d6d6d6" stroke-width="1.700000"/></svg>
<span class="t" style="left:260.74px;top:780.00px;font-size:17.5px;letter-spacing:-0.471px;-webkit-text-stroke:0;">SFO_00054</span>
<span class="t" style="left:665.74px;top:780.00px;font-size:17.5px;letter-spacing:-0.179px;-webkit-text-stroke:0;">Lenovo Inc. / Lee K ...</span>
<span class="t" style="left:859.24px;top:780.00px;font-size:17.5px;letter-spacing:0.307px;-webkit-text-stroke:0;">06/21/202...</span>
<span class="t" style="left:979.24px;top:780.00px;font-size:17.5px;letter-spacing:0.307px;-webkit-text-stroke:0;">06/22/202...</span>
<span class="t" style="left:1452.64px;top:780.00px;font-size:17.5px;letter-spacing:0.019px;-webkit-text-stroke:0;">0.00</span>
<span class="t" style="left:1498.24px;top:780.00px;font-size:17.5px;letter-spacing:-0.129px;-webkit-text-stroke:0;">ADMINISTRATION</span>
<span class="t" style="left:1687.24px;top:780.00px;font-size:17.5px;letter-spacing:0.197px;-webkit-text-stroke:0;">06/21/2024 09:00 ...</span>
<span class="t" style="left:6.74px;top:808.00px;font-size:17.5px;letter-spacing:0.456px;-webkit-text-stroke:0;">Open</span>
<span class="t" style="left:112.24px;top:808.00px;font-size:17.5px;letter-spacing:-0.114px;-webkit-text-stroke:0;">Reservation</span>
<svg style="left:227.75px;top:805.4px;" width="21" height="21" viewBox="0 0 21 21"><rect x="0.9" y="0.9" width="18.7" height="18.7" rx="3.2" fill="#fff" stroke="#d6d6d6" stroke-width="1.700000"/></svg>
<span class="t" style="left:260.74px;top:808.00px;font-size:17.5px;letter-spacing:-0.471px;-webkit-text-stroke:0;">SFO_00053</span>
<span class="t" style="left:665.74px;top:808.00px;font-size:17.5px;letter-spacing:-0.179px;-webkit-text-stroke:0;">Lenovo Inc. / Lee K ...</span>
<span class="t" style="left:859.24px;top:808.00px;font-size:17.5px;letter-spacing:0.307px;-webkit-text-stroke:0;">06/21/202...</span>
<span class="t" style="left:979.24px;top:808.00px;font-size:17.5px;letter-spacing:0.307px;-webkit-text-stroke:0;">06/22/202...</span>
<span class="t" style="left:1452.64px;top:808.00px;font-size:17.5px;letter-spacing:0.019px;-webkit-text-stroke:0;">0.00</span>
<span class="t" style="left:1498.24px;top:808.00px;font-size:17.5px;letter-spacing:-0.129px;-webkit-text-stroke:0;">ADMINISTRATION</span>
<span class="t" style="left:1687.24px;top:808.00px;font-size:17.5px;letter-spacing:0.197px;-webkit-text-stroke:0;">06/21/2024 09:00 ...</span>
<span class="t" style="left:6.74px;top:837.00px;font-size:17.5px;letter-spacing:0.456px;-webkit-text-stroke:0;">Open</span>
<span class="t" style="left:112.24px;top:837.00px;font-size:17.5px;letter-spacing:0.290px;-webkit-text-stroke:0;">Quote</span>
<svg style="left:227.75px;top:834.4px;" width="21" height="21" viewBox="0 0 21 21"><rect x="0.9" y="0.9" width="18.7" height="18.7" rx="3.2" fill="#fff" stroke="#d6d6d6" stroke-width="1.700000"/></svg>
<span class="t" style="left:260.74px;top:837.00px;font-size:17.5px;letter-spacing:-0.471px;-webkit-text-stroke:0;">SFO_00056</span>
<span class="t" style="left:665.74px;top:837.00px;font-size:17.5px;letter-spacing:-0.179px;-webkit-text-stroke:0;">Lenovo Inc. / Lee K ...</span>
<span class="t" style="left:859.24px;top:837.00px;font-size:17.5px;letter-spacing:0.307px;-webkit-text-stroke:0;">06/20/202...</span>
<span class="t" style="left:979.24px;top:837.00px;font-size:17.5px;letter-spacing:0.307px;-webkit-text-stroke:0;">06/21/202...</span>
<span class="t" style="left:1452.64px;top:837.00px;font-size:17.5px;letter-spacing:0.019px;-webkit-text-stroke:0;">0.00</span>
<span class="t" style="left:1498.24px;top:837.00px;font-size:17.5px;letter-spacing:-0.129px;-webkit-text-stroke:0;">ADMINISTRATION</span>
<span class="t" style="left:1687.24px;top:837.00px;font-size:17.5px;letter-spacing:0.197px;-webkit-text-stroke:0;">06/20/2024 09:00 ...</span>
<span class="t" style="left:6.74px;top:865.00px;font-size:17.5px;letter-spacing:0.456px;-webkit-text-stroke:0;">Open</span>
<span class="t" style="left:112.24px;top:865.00px;font-size:17.5px;letter-spacing:-0.114px;-webkit-text-stroke:0;">Reservation</span>
<svg style="left:227.75px;top:862.4px;" width="21" height="21" viewBox="0 0 21 21"><rect x="0.9" y="0.9" width="18.7" height="18.7" rx="3.2" fill="#fff" stroke="#d6d6d6" stroke-width="1.700000"/></svg>
<span class="t" style="left:260.74px;top:865.00px;font-size:17.5px;letter-spacing:-0.471px;-webkit-text-stroke:0;">SFO_00057</span>
<span class="t" style="left:665.74px;top:865.00px;font-size:17.5px;letter-spacing:-0.179px;-webkit-text-stroke:0;">Lenovo Inc. / Lee K ...</span>
<span class="t" style="left:859.24px;top:865.00px;font-size:17.5px;letter-spacing:0.307px;-webkit-text-stroke:0;">06/20/202...</span>
<span class="t" style="left:979.24px;top:865.00px;font-size:17.5px;letter-spacing:0.307px;-webkit-text-stroke:0;">06/22/202...</span>
<span class="t" style="left:1452.64px;top:865.00px;font-size:17.5px;letter-spacing:0.019px;-webkit-text-stroke:0;">0.00</span>
<span class="t" style="left:1498.24px;top:865.00px;font-size:17.5px;letter-spacing:-0.129px;-webkit-text-stroke:0;">ADMINISTRATION</span>
<span class="t" style="left:1687.24px;top:865.00px;font-size:17.5px;letter-spacing:0.197px;-webkit-text-stroke:0;">06/20/2024 09:00 ...</span>
<span class="t" style="left:6.74px;top:894.00px;font-size:17.5px;letter-spacing:0.456px;-webkit-text-stroke:0;">Open</span>
<span class="t" style="left:112.24px;top:894.00px;font-size:17.5px;letter-spacing:0.290px;-webkit-text-stroke:0;">Quote</span>
<svg style="left:227.75px;top:891.4px;" width="21" height="21" viewBox="0 0 21 21"><rect x="0.9" y="0.9" width="18.7" height="18.7" rx="3.2" fill="#fff" stroke="#d6d6d6" stroke-width="1.700000"/></svg>
<span class="t" style="left:260.74px;top:894.00px;font-size:17.5px;letter-spacing:-0.471px;-webkit-text-stroke:0;">SFO_00052</span>
<span class="t" style="left:665.74px;top:894.00px;font-size:17.5px;letter-spacing:-0.179px;-webkit-text-stroke:0;">Lenovo Inc. / Lee K ...</span>
<span class="t" style="left:859.24px;top:894.00px;font-size:17.5px;letter-spacing:0.307px;-webkit-text-stroke:0;">06/14/202...</span>
<span class="t" style="left:979.24px;top:894.00px;font-size:17.5px;letter-spacing:0.307px;-webkit-text-stroke:0;">06/15/202...</span>
<span class="t" style="left:1452.64px;top:894.00px;font-size:17.5px;letter-spacing:0.019px;-webkit-text-stroke:0;">0.00</span>
<span class="t" style="left:1498.24px;top:894.00px;font-size:17.5px;letter-spacing:-0.129px;-webkit-text-stroke:0;">ADMINISTRATION</span>
<span class="t" style="left:1687.24px;top:894.00px;font-size:17.5px;letter-spacing:0.197px;-webkit-text-stroke:0;">06/14/2024 09:00 ...</span>
<div style="left:0px;top:911px;width:1920px;height:21px;background:#fff;"></div>
<div style="left:2px;top:911px;width:1901px;height:15px;background:#f3f3f3;"></div>
<div style="left:2px;top:911px;width:1622px;height:15px;background:#dcdcdc;"></div>
<div style="left:1903px;top:650px;width:15px;height:261px;background:#f3f3f3;"></div>
<div style="left:1903px;top:650px;width:15px;height:81px;background:#dcdcdc;"></div>
<div style="left:1918px;top:640px;width:2px;height:292px;background:#fff;"></div>
<div style="left:2px;top:932px;width:148px;height:36px;border:1px solid #bdbdbd;border-top-color:#dcdcdc;border-left-color:#e2e2e2;background:#fff;"></div>
<span class="t" style="left:19.43px;top:946.00px;font-size:17.7px;letter-spacing:0.172px;">S - Sale Order</span>
<div style="left:1px;top:927px;width:1918px;height:1px;background:#f0f0f0;"></div>
<div style="left:1918px;top:650px;width:1px;height:278px;background:#f0f0f0;"></div>
<div style="left:0px;top:983px;width:1920px;height:1px;background:#a0a0a0;"></div>
<div style="left:1px;top:985px;width:1918px;height:1px;background:#696969;"></div>
<div style="left:1px;top:985px;width:1px;height:5px;background:#696969;"></div>
<div style="left:1918px;top:985px;width:1px;height:5px;background:#696969;"></div>
<div style="left:655px;top:142px;width:610px;height:725px;background:#fff;border:1px solid #a6a6a6;"></div>
<div style="left:656px;top:187px;width:606px;height:1px;background:#a0a0a0;"></div>
<div style="left:1260px;top:188px;width:1px;height:676px;background:#b4b4b4;"></div>
<div style="left:1261px;top:188px;width:1px;height:676px;background:#a0a0a0;"></div>
<div style="left:656px;top:863px;width:606px;height:1px;background:#a8a8a8;"></div>
<div style="left:667px;top:152px;width:24px;height:24px;background:#3ea8f5;"></div>
<span class="t" style="left:669.80px;top:158.00px;font-size:13.3px;letter-spacing:0.582px;font-weight:700;color:#fff;">R2</span>
<span class="t" style="left:697.23px;top:157.00px;font-size:18.2px;letter-spacing:0.097px;color:#a0a0a0;-webkit-text-stroke:0;">Order Information</span>
<svg style="left:1230px;top:155px;" width="20" height="20" viewBox="0 0 20 20"><path d="M2 2l15 15M17 2l-15 15" stroke="#7c7c7c" stroke-width="1.100000" fill="none"/></svg>
<span class="t" style="left:671.23px;top:219.00px;font-size:17.7px;letter-spacing:0.106px;">Description</span>
<div class="inp" style="left:793px;top:212px;width:443px;height:38px;"></div>
<span class="t" style="left:671.23px;top:264.00px;font-size:17.7px;letter-spacing:0.125px;color:#0c0cf2;">Charge Duration</span>
<div class="inp" style="left:883px;top:257px;width:147px;height:36px;"></div>
<span class="t" style="left:885.69px;top:265.00px;font-size:20.5px;letter-spacing:0.348px;font-weight:700;">1d</span>
<span class="t" style="left:671.23px;top:310.00px;font-size:17.7px;letter-spacing:0.149px;color:#0c0cf2;">Charge Start/Ship Date</span>
<span class="t" style="left:671.23px;top:349.00px;font-size:17.7px;letter-spacing:0.116px;color:#0c0cf2;">Return Date</span>
<div class="inp" style="left:883px;top:299px;width:127px;height:36px;"></div>
<div style="left:1010px;top:299px;width:23px;height:36px;background:#f1f1f1;border:1px solid #fff;border-width:1px 1px 1px 2px;border-top-color:#e9eaee;border-right-color:#a6a6b0;border-bottom-color:#a6a6b0;box-shadow:inset 0 1px 0 #fff;"></div>
<svg style="left:1014px;top:313px;" width="14" height="10" viewBox="0 0 14 10"><path d="M1 1.200000h12.200000l-6.100000 6z" fill="#c1c3cc"/></svg>
<span class="t" style="left:887.23px;top:309.00px;font-size:18.1px;letter-spacing:0.361px;color:#111;-webkit-text-stroke:0;">06/29/2024</span>
<span class="t" style="left:1050.73px;top:310.00px;font-size:17.7px;letter-spacing:0.124px;color:#0c0cf2;">Time</span>
<div class="inp" style="left:1108px;top:299px;width:105px;height:36px;"></div>
<span class="t" style="left:1111.73px;top:310.00px;font-size:17.7px;letter-spacing:0.240px;">09:00 AM</span>
<div class="inp" style="left:883px;top:344px;width:127px;height:36px;"></div>
<div style="left:1010px;top:344px;width:23px;height:36px;background:#f1f1f1;border:1px solid #fff;border-width:1px 1px 1px 2px;border-top-color:#e9eaee;border-right-color:#a6a6b0;border-bottom-color:#a6a6b0;box-shadow:inset 0 1px 0 #fff;"></div>
<svg style="left:1014px;top:358px;" width="14" height="10" viewBox="0 0 14 10"><path d="M1 1.200000h12.200000l-6.100000 6z" fill="#c1c3cc"/></svg>
<span class="t" style="left:887.23px;top:354.00px;font-size:18.1px;letter-spacing:0.361px;color:#111;-webkit-text-stroke:0;">06/30/2024</span>
<span class="t" style="left:1050.73px;top:358.00px;font-size:17.7px;letter-spacing:0.124px;color:#0c0cf2;">Time</span>
<div class="inp" style="left:1108px;top:344px;width:105px;height:36px;"></div>
<span class="t" style="left:1111.73px;top:355.00px;font-size:17.7px;letter-spacing:0.240px;">09:00 AM</span>
<div style="left:835.5px;top:397px;width:151.5px;height:48.5px;background:#f9f9f9;"></div>
<div style="left:685.5px;top:445px;width:539.5px;height:1px;background:#e9e9e9;"></div>
<div style="left:685.5px;top:442px;width:150px;height:4px;background:#aaccf2;"></div>
<span class="t" style="left:696.24px;top:415.00px;font-size:17.5px;letter-spacing:0.232px;font-weight:700;-webkit-text-stroke:0;">Customer Info</span>
<span class="t" style="left:847.24px;top:415.00px;font-size:17.5px;letter-spacing:0.112px;-webkit-text-stroke:0;">Billing Co. Info</span>
<span class="t" style="left:693.23px;top:471.00px;font-size:17.7px;letter-spacing:-0.268px;">ID</span>
<div class="ro2" style="left:801px;top:464px;width:195px;height:36px;"></div>
<span class="t" style="left:803.23px;top:475.00px;font-size:17.7px;letter-spacing:0.361px;color:#444;">CU302110</span>
<span class="t" style="left:693.23px;top:508.00px;font-size:17.7px;letter-spacing:0.064px;">Company</span>
<div class="ro2" style="left:801px;top:509px;width:387px;height:36px;"></div>
<span class="t" style="left:803.23px;top:520.00px;font-size:17.7px;letter-spacing:0.018px;color:#444;">Lenovo Inc.</span>
<span class="t" style="left:693.23px;top:561.00px;font-size:17.7px;letter-spacing:0.240px;">Contact</span>
<div class="ro2" style="left:801px;top:554px;width:387px;height:36px;"></div>
<span class="t" style="left:803.23px;top:565.00px;font-size:17.7px;letter-spacing:0.076px;color:#444;">Lee K Xinping</span>
<svg style="left:1162px;top:515px;" width="21" height="20" viewBox="0 0 21 20"><circle cx="8.2" cy="8.2" r="6.1" stroke="#2f77d0" stroke-width="1.5" fill="none"/><path d="M12.6 12.8l5.6 5.4" stroke="#2467c4" stroke-width="2.4" stroke-linecap="round"/></svg>
<svg style="left:1162px;top:560px;" width="21" height="20" viewBox="0 0 21 20"><circle cx="8.2" cy="8.2" r="6.1" stroke="#2f77d0" stroke-width="1.5" fill="none"/><path d="M12.6 12.8l5.6 5.4" stroke="#2467c4" stroke-width="2.4" stroke-linecap="round"/></svg>
<span class="t" style="left:674.03px;top:631.00px;font-size:17.7px;letter-spacing:0.073px;">Ship Via</span>
<div class="dd" style="left:808px;top:620px;width:150px;height:36px;"><i></i></div>
<span class="t" style="left:812.23px;top:631.00px;font-size:17.7px;letter-spacing:0.110px;color:#444;">Customer</span>
<svg style="left:936.5px;top:631.5px;" width="18" height="14" viewBox="0 0 18 14"><path d="M2.5 3.5l6.3 6.3 6.3-6.3" stroke="#555" stroke-width="1.3" fill="none"/></svg>
<span class="t" style="left:971.13px;top:631.00px;font-size:17.7px;letter-spacing:0.050px;">Return Via</span>
<div class="dd" style="left:1063px;top:620px;width:165px;height:36px;"><i></i></div>
<span class="t" style="left:1067.23px;top:631.00px;font-size:17.7px;letter-spacing:0.110px;color:#444;">Customer</span>
<svg style="left:1206.5px;top:631.5px;" width="18" height="14" viewBox="0 0 18 14"><path d="M2.5 3.5l6.3 6.3 6.3-6.3" stroke="#555" stroke-width="1.3" fill="none"/></svg>
<span class="t" style="left:671.23px;top:676.00px;font-size:17.7px;letter-spacing:0.166px;">Salesperson</span>
<div class="ro2" style="left:808px;top:670px;width:421px;height:36px;"></div>
<svg style="left:669px;top:723px;" width="21" height="21" viewBox="0 0 21 21"><rect x="0.9" y="0.9" width="18.7" height="18.7" rx="3.2" fill="#fff" stroke="#d6d6d6" stroke-width="1.700000"/></svg>
<span class="t" style="left:692.13px;top:726.00px;font-size:17.7px;letter-spacing:0.222px;">Sale Order</span>
<svg style="left:826.5px;top:723px;" width="21" height="21" viewBox="0 0 21 21"><rect x="0.95" y="0.95" width="18.6" height="18.6" rx="3.2" fill="#fff" stroke="#6aa5ec" stroke-width="1.9"/><path d="M4.2 10.8l4.700000 4.800000 7-11.800000" stroke="#5b9cea" stroke-width="2.900000" fill="none" stroke-linejoin="miter"/></svg>
<span class="t" style="left:849.43px;top:726.00px;font-size:17.7px;letter-spacing:0.126px;">Event Pricing</span>
<svg style="left:992px;top:723px;" width="21" height="21" viewBox="0 0 21 21"><rect x="0.9" y="0.9" width="18.7" height="18.7" rx="3.2" fill="#fff" stroke="#d6d6d6" stroke-width="1.700000"/></svg>
<span class="t" style="left:1014.03px;top:726.00px;font-size:17.7px;letter-spacing:0.177px;">Day-Week-Month Pricing</span>
<svg style="left:669px;top:760.7px;" width="21" height="21" viewBox="0 0 21 21"><rect x="0.9" y="0.9" width="18.7" height="18.7" rx="3.2" fill="#f3f3f3" stroke="#dbdbdb" stroke-width="1.700000"/></svg>
<span class="t" style="left:692.13px;top:763.00px;font-size:17.7px;letter-spacing:0.136px;color:#8e8e8e;">Default UDF from Event</span>
<div class="btn" style="left:804px;top:797px;width:135px;height:53px;"></div>
<span class="t" style="left:859.03px;top:816.00px;font-size:17.7px;letter-spacing:0.794px;">OK</span><div style="left:859.03px;top:831.5px;width:14.16px;height:1.5px;background:#000;"></div>
<div class="btn" style="left:949px;top:797px;width:135px;height:53px;"></div>
<span class="t" style="left:989.73px;top:816.00px;font-size:17.7px;letter-spacing:0.265px;">Cancel</span><div style="left:989.73px;top:831.5px;width:12.91px;height:1.5px;background:#000;"></div>
</div>
</body></html>
